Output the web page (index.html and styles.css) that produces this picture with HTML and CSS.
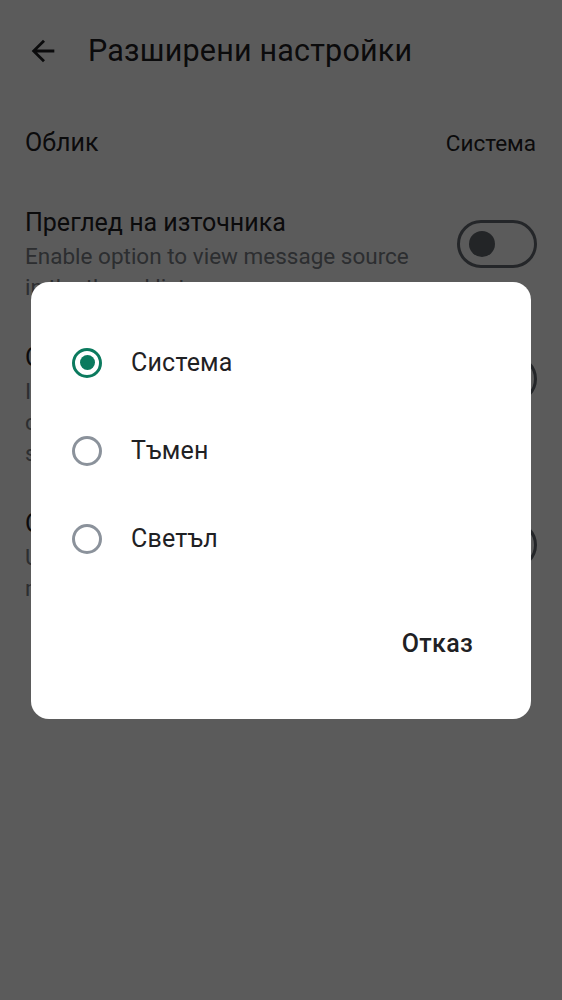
FILE: index.html
```html
<!DOCTYPE html>
<html lang="bg">
<head>
<meta charset="utf-8">
<title>Разширени настройки</title>
<link rel="stylesheet" href="styles.css">
</head>
<body>
<div class="page">
  <header class="topbar">
    <svg class="back" viewBox="0 0 24 24" width="34" height="34" aria-hidden="true">
      <path d="M20 11H7.83l5.59-5.59L12 4l-8 8 8 8 1.41-1.41L7.83 13H20v-2z"/>
    </svg>
    <h1 class="title">Разширени настройки</h1>
  </header>

  <div class="list">
    <div class="row row-simple">
      <span class="row-title">Облик</span>
      <span class="row-value">Система</span>
    </div>

    <div class="row">
      <div class="row-text">
        <div class="row-title">Преглед на източника</div>
        <div class="row-sub">Enable option to view message source in the thread list</div>
      </div>
      <span class="toggle"><span class="thumb"></span></span>
    </div>

    <div class="row">
      <div class="row-text">
        <div class="row-title">Опростено показване</div>
        <div class="row-sub">If enabled, messages are shown compactly, with more messages per screen</div>
      </div>
      <span class="toggle"><span class="thumb"></span></span>
    </div>

    <div class="row">
      <div class="row-text">
        <div class="row-title">Отваряне на връзки</div>
        <div class="row-sub">Use the in-app browser to open links in messages</div>
      </div>
      <span class="toggle"><span class="thumb"></span></span>
    </div>
  </div>
</div>

<div class="scrim">
  <div class="dialog" role="dialog">
    <div class="options">
      <div class="option">
        <span class="radio checked"><span class="dot"></span></span>
        <span class="option-label">Система</span>
      </div>
      <div class="option">
        <span class="radio"></span>
        <span class="option-label">Тъмен</span>
      </div>
      <div class="option">
        <span class="radio"></span>
        <span class="option-label">Светъл</span>
      </div>
    </div>
    <div class="actions">
      <span class="btn">Отказ</span>
    </div>
  </div>
</div>
</body>
</html>
```

FILE: styles.css
```css
html, body {
  margin: 0;
  padding: 0;
}

body {
  width: 562px;
  height: 1000px;
  overflow: hidden;
  background: #ffffff;
  font-family: Roboto, "Noto Sans", "DejaVu Sans", sans-serif;
  color: #1f2124;
}

.page {
  height: 1000px;
  padding: 0 26px 0 25px;
  box-sizing: border-box;
}

.topbar {
  height: 100px;
  display: flex;
  align-items: center;
}

.back {
  fill: #1f2124;
  margin-left: 1px;
  margin-top: 2px;
  flex: none;
}

.title {
  margin: 0 0 0 28px;
  font-size: 30.5px;
  font-weight: 400;
  letter-spacing: 0.2px;
  color: #1f2124;
}

.list {
  display: flex;
  flex-direction: column;
}

.row {
  display: flex;
  align-items: flex-start;
  justify-content: space-between;
  padding: 20px 0;
}

.row-simple {
  align-items: center;
  padding: 28px 0 30px;
}

.row-text {
  flex: 1;
  min-width: 0;
  padding-right: 38px;
}

.row-title {
  font-size: 25px;
  line-height: 30px;
  color: #1f2124;
}

.row-value {
  font-size: 22.5px;
  line-height: 30px;
  color: #1f2124;
}

.row-sub {
  margin-top: 3px;
  font-size: 22.5px;
  line-height: 31px;
  color: #7b8087;
}

.toggle {
  flex: none;
  width: 80px;
  height: 48px;
  box-sizing: border-box;
  border: 3px solid #666c73;
  border-radius: 24px;
  margin-top: 12px;
  margin-right: -1px;
  display: flex;
  align-items: center;
  padding-left: 9px;
}

.thumb {
  width: 26px;
  height: 26px;
  border-radius: 50%;
  background: #62686f;
}

.scrim {
  position: fixed;
  inset: 0;
  background: rgba(0, 0, 0, 0.643);
  display: flex;
  align-items: center;
  justify-content: center;
}

.dialog {
  width: 500px;
  height: 437px;
  box-sizing: border-box;
  background: #ffffff;
  border-radius: 18px;
  padding: 37px 0 0;
  display: flex;
  flex-direction: column;
}

.options {
  display: flex;
  flex-direction: column;
}

.option {
  height: 88px;
  display: flex;
  align-items: center;
  padding-left: 41px;
}

.radio {
  width: 30px;
  height: 30px;
  box-sizing: border-box;
  border: 3px solid #8b929b;
  border-radius: 50%;
  display: flex;
  align-items: center;
  justify-content: center;
  flex: none;
}

.radio.checked {
  border-color: #0b7a5e;
}

.dot {
  width: 15px;
  height: 15px;
  border-radius: 50%;
  background: #0b7a5e;
}

.option-label {
  margin-left: 29px;
  font-size: 25px;
  color: #1f2124;
  letter-spacing: 0.2px;
}

.actions {
  margin-top: 37px;
  height: 48px;
  display: flex;
  align-items: center;
  justify-content: flex-end;
  padding-right: 58px;
}

.btn {
  font-size: 25px;
  font-weight: 500;
  color: #1f2124;
  letter-spacing: 0.3px;
}
```
